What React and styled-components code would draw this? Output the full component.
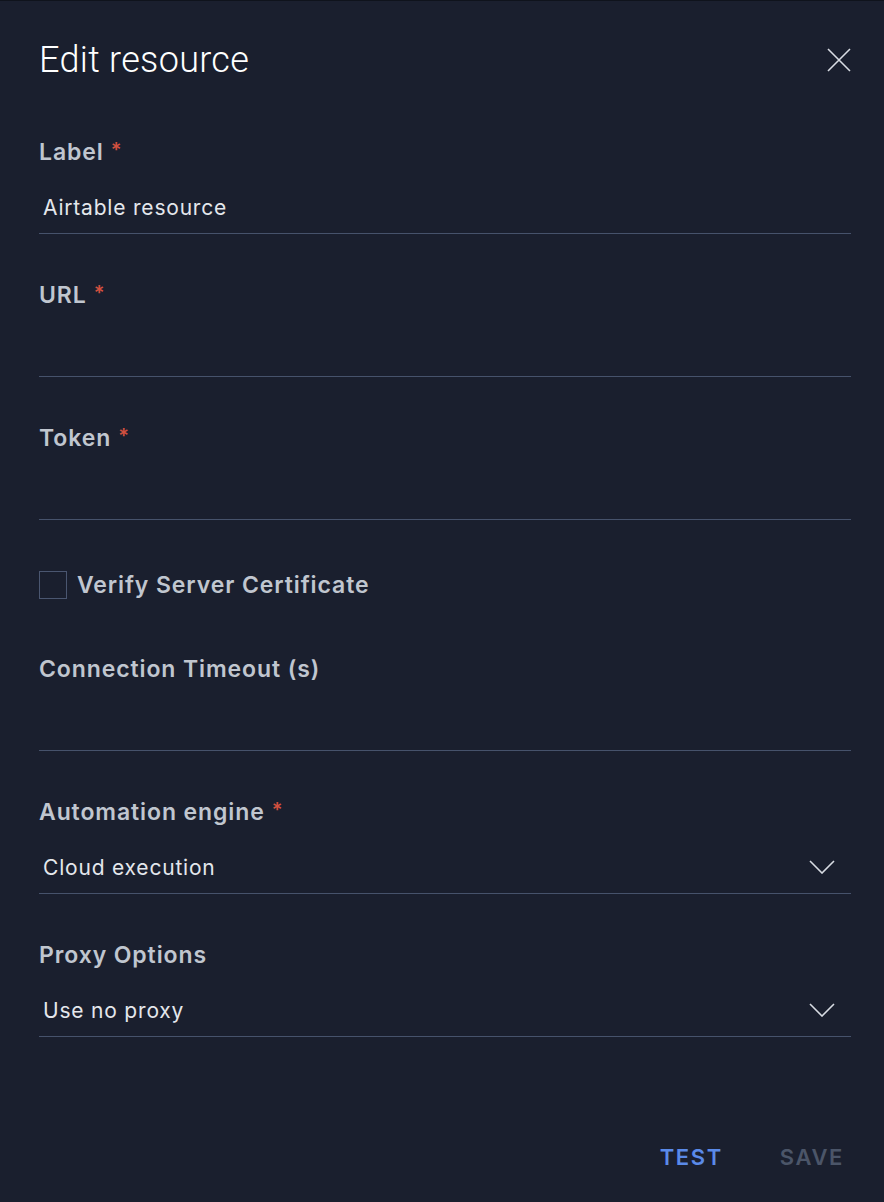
import React from "react";
import styled, { createGlobalStyle } from "styled-components";

const GlobalStyle = createGlobalStyle`
  html, body {
    margin: 0;
    padding: 0;
    background: #1a1f2e;
  }
  * {
    box-sizing: border-box;
  }
`;

function CloseIcon() {
  return (
    <svg width="24" height="24" viewBox="0 0 24 24" fill="none">
      <path d="M1 1L23 23M23 1L1 23" stroke="#d8dce3" strokeWidth="1.6" />
    </svg>
  );
}

function Chevron() {
  return (
    <svg width="26" height="14" viewBox="0 0 26 14" fill="none">
      <path d="M1 1L13 13L25 1" stroke="#d8dce3" strokeWidth="1.6" />
    </svg>
  );
}

const fields = [
  { label: "Label", required: true, value: "Airtable resource" },
  { label: "URL", required: true, value: "" },
  { label: "Token", required: true, value: "" },
];

function Field({ label, required, value, select }) {
  return (
    <FieldWrap>
      <Label>
        {label}
        {required && <Star>*</Star>}
      </Label>
      <Input $select={select}>
        <span>{value}</span>
        {select && <Chevron />}
      </Input>
    </FieldWrap>
  );
}

function App() {
  return (
    <Panel>
      <GlobalStyle />
      <Header>
        <Title>Edit resource</Title>
        <CloseButton>
          <CloseIcon />
        </CloseButton>
      </Header>

      <Form>
        {fields.map((f) => (
          <Field key={f.label} {...f} />
        ))}

        <CheckRow>
          <Box />
          <CheckText>Verify Server Certificate</CheckText>
        </CheckRow>

        <Field label="Connection Timeout (s)" value="" />
        <Field label="Automation engine" required value="Cloud execution" select />
        <Field label="Proxy Options" value="Use no proxy" select />
      </Form>

      <Footer>
        <ActionButton $primary>TEST</ActionButton>
        <ActionButton>SAVE</ActionButton>
      </Footer>
    </Panel>
  );
}

const Panel = styled.div`
  width: 884px;
  height: 1202px;
  background: #1a1f2e;
  border-top: 1px solid #0f131c;
  padding: 0 33px 0 39px;
  display: flex;
  flex-direction: column;
  font-family: Inter, "Open Sans", sans-serif;
`;

const Header = styled.div`
  display: flex;
  justify-content: space-between;
  align-items: center;
  height: 118px;
`;

const Title = styled.h1`
  margin: 0;
  font-family: Roboto, "Liberation Sans", sans-serif;
  font-weight: 300;
  font-size: 36px;
  line-height: 42px;
  color: #ffffff;
  letter-spacing: 0.3px;
`;

const CloseButton = styled.button`
  background: none;
  border: none;
  padding: 0;
  width: 24px;
  height: 24px;
  display: flex;
`;

const Form = styled.div`
  display: flex;
  flex-direction: column;
  gap: 47px;
  padding-top: 19px;
`;

const FieldWrap = styled.div`
  display: flex;
  flex-direction: column;
`;

const Label = styled.div`
  font-size: 23px;
  font-weight: 600;
  color: #c0c6cf;
  letter-spacing: 0.9px;
  line-height: 28px;
`;

const Star = styled.span`
  color: #d2503f;
  margin-left: 7px;
  font-size: 20px;
  vertical-align: top;
  line-height: 24px;
`;

const Input = styled.div`
  height: 51px;
  margin-top: 17px;
  border-bottom: 1px solid #46526b;
  display: flex;
  align-items: center;
  justify-content: space-between;
  padding: 0 16px 2px 4px;
  font-size: 21px;
  font-weight: 400;
  color: #e4e7ec;
  letter-spacing: 0.8px;
`;

const CheckRow = styled.div`
  display: flex;
  align-items: center;
  gap: 10px;
  margin-top: 4px;
  margin-bottom: 9px;
`;

const Box = styled.div`
  width: 28px;
  height: 28px;
  border: 1px solid #4a5670;
`;

const CheckText = styled.span`
  font-size: 23px;
  font-weight: 600;
  color: #c0c6cf;
  letter-spacing: 0.9px;
  line-height: 28px;
`;

const Footer = styled.div`
  margin-top: auto;
  display: flex;
  justify-content: flex-end;
  gap: 57px;
  padding: 0 7px 30px 0;
`;

const ActionButton = styled.button`
  background: none;
  border: none;
  padding: 0;
  font-family: Inter, "Open Sans", sans-serif;
  font-size: 22px;
  font-weight: 600;
  line-height: 30px;
  letter-spacing: 1.6px;
  color: ${(p) => (p.$primary ? "#5a8ae8" : "#4b5568")};
`;

export default App;
